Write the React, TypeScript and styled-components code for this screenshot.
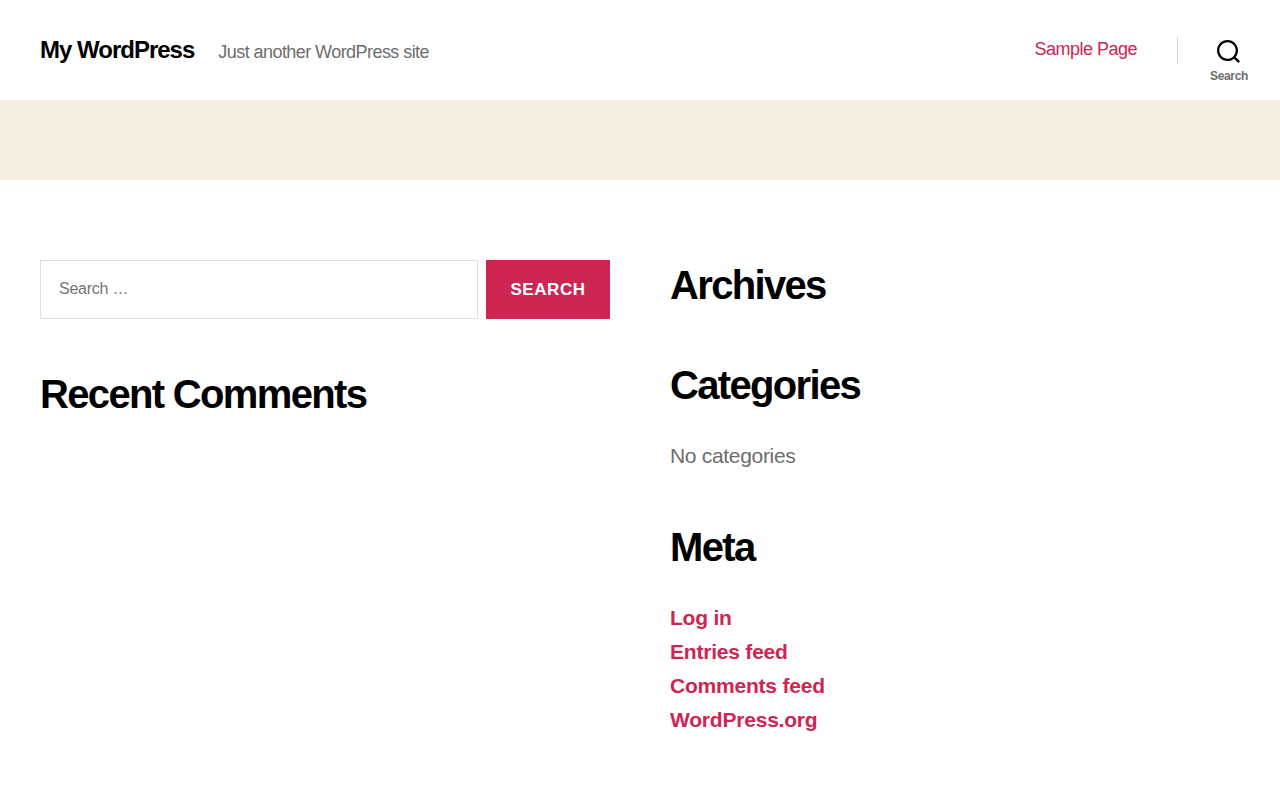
import React from "react";
import styled, { createGlobalStyle } from "styled-components";

const accent = "#cd2653";
const muted = "#6d6d6d";

const GlobalStyle = createGlobalStyle`
  *, *::before, *::after { box-sizing: border-box; }
  body {
    margin: 0;
    background: #fff;
    color: #000;
    font-family: "Liberation Sans", Arial, sans-serif;
    font-size: 18px;
  }
`;

const Header = styled.header`
  background: #fff;
  display: flex;
  align-items: center;
  justify-content: space-between;
  min-height: 100px;
  padding-left: 40px;
`;

const Branding = styled.div`
  display: flex;
  align-items: baseline;
  gap: 24px;
  padding-top: 4px;
`;

const SiteTitle = styled.h1`
  margin: 0;
  font-size: 24px;
  line-height: 24px;
  font-weight: 600;
  letter-spacing: -0.0415em;
`;

const TitleLink = styled.a`
  color: inherit;
  text-decoration: none;
`;

const Tagline = styled.p`
  margin: 0;
  color: ${muted};
  font-size: 18px;
  line-height: 27px;
  letter-spacing: -0.0311em;
`;

const Navigation = styled.nav`
  display: flex;
  align-items: center;
  align-self: stretch;
`;

const NavLink = styled.a`
  color: ${accent};
  text-decoration: none;
  font-size: 18px;
  line-height: 22px;
  letter-spacing: -0.0277em;
  padding-bottom: 2px;
`;

const Divider = styled.span`
  width: 1px;
  height: 27px;
  margin-left: 40px;
  background: #dcd7ca;
`;

const SearchToggle = styled.button`
  display: flex;
  flex-direction: column;
  align-items: center;
  align-self: stretch;
  gap: 7px;
  padding: 40px 32px 0;
  border: 0;
  background: none;
  color: ${muted};
  font: 600 12px/12px "Liberation Sans", Arial, sans-serif;
  letter-spacing: -0.0277em;
  cursor: pointer;

  svg { display: block; color: #000; }
`;

const Band = styled.div`
  height: 80px;
  background: #f5efe0;
`;

const Widgets = styled.footer`
  display: grid;
  grid-template-columns: 1fr 1fr;
  gap: 60px;
  padding: 80px 40px 64px;
`;

const Column = styled.div`
  display: flex;
  flex-direction: column;
  gap: 50px;
`;

const SearchForm = styled.form`
  display: flex;
  gap: 8px;
`;

const SearchInput = styled.input`
  flex: 1;
  min-width: 0;
  height: 59px;
  padding: 0 18px 2px;
  border: 1px solid #dedfdf;
  border-radius: 0;
  background: #fff;
  font: 16px "Liberation Sans", Arial, sans-serif;
  letter-spacing: -0.015em;
  &::placeholder { color: #757575; opacity: 1; }
`;

const SubmitButton = styled.button`
  width: 124px;
  border: 0;
  padding: 0;
  background: ${accent};
  color: #fff;
  font: 600 17px "Liberation Sans", Arial, sans-serif;
  letter-spacing: 0.0333em;
  text-transform: uppercase;
  cursor: pointer;
`;

const WidgetTitle = styled.h2`
  margin: 0;
  font-size: 40px;
  line-height: 50px;
  font-weight: 700;
  letter-spacing: -0.0415em;
`;

const List = styled.ul<{ $links?: boolean }>`
  display: grid;
  gap: 2px;
  list-style: none;
  margin: 30px 0 0;
  padding: 0;
  color: ${muted};
  font-size: 21px;
  line-height: 32px;
  font-weight: ${(p) => (p.$links ? 700 : 400)};
  letter-spacing: ${(p) => (p.$links ? "-0.01em" : "-0.015em")};
`;

const ListLink = styled.a`
  color: ${accent};
  text-decoration: none;
`;

const metaLinks = ["Log in", "Entries feed", "Comments feed", "WordPress.org"];

export default function App() {
  return (
    <>
      <GlobalStyle />
      <Header>
        <Branding>
          <SiteTitle><TitleLink href="#">My WordPress</TitleLink></SiteTitle>
          <Tagline>Just another WordPress site</Tagline>
        </Branding>
        <Navigation>
          <NavLink href="#">Sample Page</NavLink>
          <Divider />
          <SearchToggle type="button">
            <svg width="23" height="23" viewBox="0 0 23 23" aria-hidden="true">
              <path fill="currentColor" d="M38.710696,48.0601792 L43,52.3494831 L41.3494831,54 L37.0601792,49.710696 C35.2632422,51.1481185 32.9839107,52.0076499 30.5038249,52.0076499 C24.7027226,52.0076499 20,47.3049272 20,41.5038249 C20,35.7027226 24.7027226,31 30.5038249,31 C36.3049272,31 41.0076499,35.7027226 41.0076499,41.5038249 C41.0076499,43.9839107 40.1481185,46.2632422 38.710696,48.0601792 Z M36.3875844,47.1716785 C37.8030221,45.7026647 38.6734666,43.7048964 38.6734666,41.5038249 C38.6734666,36.9918565 35.0157934,33.3341833 30.5038249,33.3341833 C25.9918565,33.3341833 22.3341833,36.9918565 22.3341833,41.5038249 C22.3341833,46.0157934 25.9918565,49.6734666 30.5038249,49.6734666 C32.7048964,49.6734666 34.7026647,48.8030221 36.1716785,47.3875844 C36.2023931,47.347638 36.2360451,47.3092237 36.2726343,47.2726343 C36.3092237,47.2360451 36.347638,47.2023931 36.3875844,47.1716785 Z" transform="translate(-20 -31)" />
            </svg>
            Search
          </SearchToggle>
        </Navigation>
      </Header>
      <Band />
      <Widgets>
        <Column>
          <SearchForm role="search" onSubmit={(e) => e.preventDefault()}>
            <SearchInput type="search" aria-label="Search for:" placeholder="Search …" />
            <SubmitButton type="submit">Search</SubmitButton>
          </SearchForm>
          <WidgetTitle>Recent Comments</WidgetTitle>
        </Column>
        <Column>
          <WidgetTitle>Archives</WidgetTitle>
          <section>
            <WidgetTitle>Categories</WidgetTitle>
            <List><li>No categories</li></List>
          </section>
          <section>
            <WidgetTitle>Meta</WidgetTitle>
            <List $links>
              {metaLinks.map((label) => (
                <li key={label}><ListLink href="#">{label}</ListLink></li>
              ))}
            </List>
          </section>
        </Column>
      </Widgets>
    </>
  );
}
